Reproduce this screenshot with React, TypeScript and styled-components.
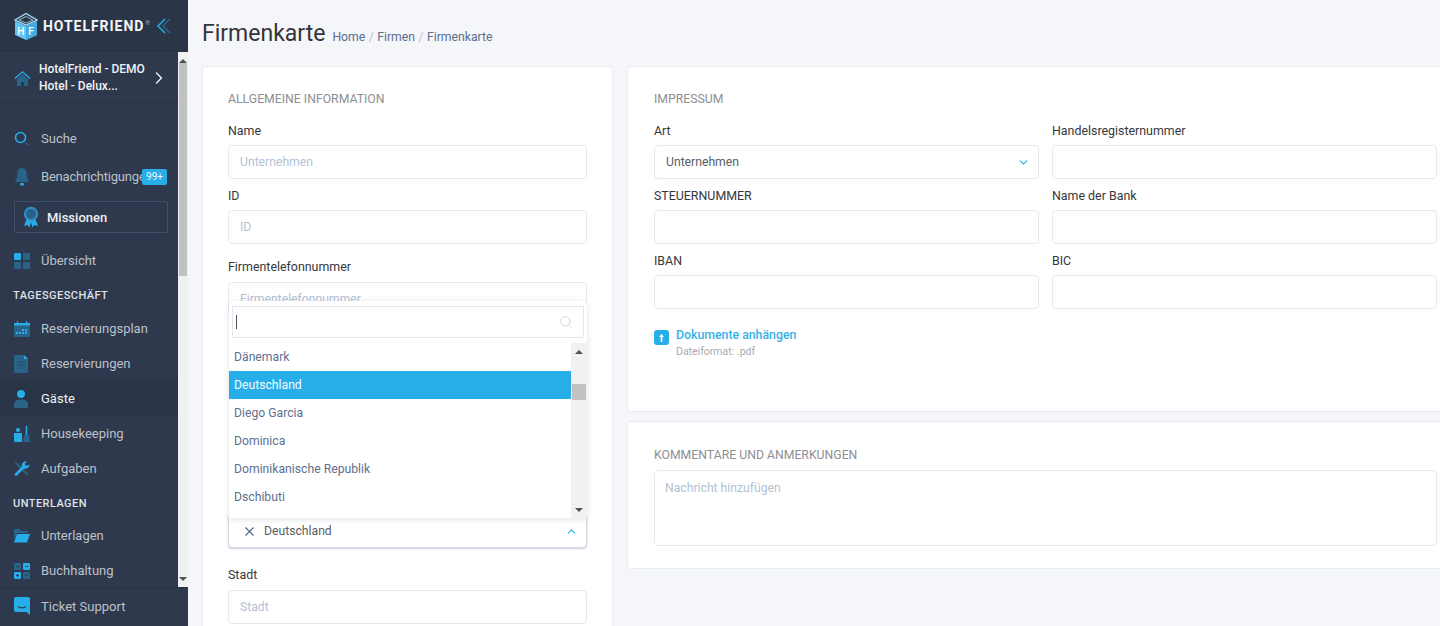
import styled, { createGlobalStyle } from "styled-components";
import { Search, X, ChevronDown, ChevronUp, ChevronRight } from "lucide-react";

const BRIGHT = "#27aee8";
const DIM = "#296387";

const GlobalStyle = createGlobalStyle`
  html, body {
    margin: 0;
    padding: 0;
    height: 100%;
    overflow: hidden;
    background: #f5f6fa;
    font-family: Roboto, "Liberation Sans", sans-serif;
  }
  * { box-sizing: border-box; }
`;

const Page = styled.div`
  display: flex;
  width: 1440px;
  height: 626px;
  overflow: hidden;
`;

const Sidebar = styled.aside`
  flex: 0 0 188px;
  display: flex;
  flex-direction: column;
  background: #2f394d;
`;

const Brand = styled.div`
  flex: 0 0 52px;
  display: flex;
  align-items: center;
  padding-left: 14px;
  background: #2b3548;
  border-bottom: 1px solid #273143;
`;

const BrandName = styled.span`
  margin-left: 5px;
  font-size: 14px;
  font-weight: 700;
  letter-spacing: 0.95px;
  color: #f4f6f8;
  white-space: nowrap;
  sup {
    font-size: 6px;
    font-weight: 400;
    color: #aab2bf;
    vertical-align: 6px;
    line-height: 0;
    margin-left: 1px;
  }
`;

const Collapse = styled.span`
  display: flex;
  margin-left: 6px;
`;

const SideBody = styled.div`
  flex: 1;
  min-height: 0;
  display: flex;
`;

const SideColumn = styled.div`
  flex: 0 0 178px;
  min-width: 0;
  overflow: hidden;
`;

const HotelBlock = styled.div`
  height: 51px;
  display: flex;
  align-items: center;
  padding: 2px 0 0 14px;
  border-bottom: 1px solid #283244;
  color: #f0f2f5;
`;

const HotelName = styled.div`
  margin-left: 8px;
  width: 113px;
  font-size: 12px;
  font-weight: 500;
  line-height: 17px;
  white-space: nowrap;
`;

const HotelArrow = styled.span`
  display: flex;
  margin-left: -3px;
`;

const NavList = styled.nav`
  padding-top: 18px;
`;

const NavItem = styled.div<{ $top?: number; $active?: boolean }>`
  position: relative;
  height: 35px;
  margin-top: ${(p) => p.$top ?? 0}px;
  display: flex;
  align-items: center;
  padding-left: 14px;
  background: ${(p) => (p.$active ? "#293447" : "transparent")};
  color: ${(p) => (p.$active ? "#f0f2f5" : "#bcc1ca")};
  font-size: 13px;
  white-space: nowrap;
`;

const NavIcon = styled.span`
  flex: 0 0 27px;
  display: flex;
  align-items: center;
`;

const TightLabel = styled.span`
  letter-spacing: -0.2px;
`;

const Badge = styled.span`
  position: absolute;
  left: 142px;
  top: 10px;
  width: 25px;
  height: 16px;
  border-radius: 2px;
  background: ${BRIGHT};
  color: #e9f7fd;
  font-size: 10px;
  line-height: 16px;
  text-align: center;
`;

const MissionBox = styled.div`
  margin: 7px 0 0 14px;
  width: 154px;
  height: 32px;
  display: flex;
  align-items: center;
  padding-left: 8px;
  border: 1px solid #42506a;
  border-radius: 2px;
  color: #eef0f3;
  font-size: 13px;
  font-weight: 500;
`;

const MissionIcon = styled.span`
  flex: 0 0 24px;
  display: flex;
`;

const SectionLabel = styled.div<{ $height: number }>`
  height: ${(p) => p.$height}px;
  display: flex;
  align-items: center;
  padding: 2px 0 0 13px;
  color: #dfe2e7;
  font-size: 11px;
  font-weight: 500;
  letter-spacing: 0.45px;
`;

const SideFooter = styled.div`
  flex: 0 0 39px;
  display: flex;
  align-items: center;
  padding: 0 0 2px 14px;
  background: #2f394d;
  border-top: 1px solid #283244;
  color: #bcc1ca;
  font-size: 13px;
`;

const ScrollTrack = styled.div<{ $width: number }>`
  flex: 0 0 ${(p) => p.$width}px;
  display: flex;
  flex-direction: column;
  align-items: center;
  background: #f1f1f1;
`;

const ScrollCap = styled.div`
  flex: 0 0 17px;
  display: flex;
  align-items: center;
  justify-content: center;
`;

const Caret = styled.span<{ $down?: boolean }>`
  width: 0;
  height: 0;
  border-left: 4px solid transparent;
  border-right: 4px solid transparent;
  ${(p) => (p.$down ? "border-top: 4px solid #505050;" : "border-bottom: 4px solid #505050;")}
`;

const ScrollThumb = styled.div<{ $offset: number; $height: number }>`
  flex: 0 0 ${(p) => p.$height}px;
  width: calc(100% - 2px);
  margin-top: ${(p) => p.$offset}px;
  background: #c1c1c1;
`;

const ScrollGap = styled.div`
  flex: 1;
`;

const Main = styled.main`
  flex: 1;
  min-width: 0;
  padding-left: 14px;
`;

const TitleRow = styled.header`
  height: 66px;
  display: flex;
  align-items: baseline;
  padding-top: 19px;
`;

const Title = styled.h1`
  margin: 0;
  font-size: 23px;
  line-height: 30px;
  font-weight: 400;
  color: #333438;
`;

const Crumbs = styled.div`
  margin-left: 7px;
  font-size: 12.2px;
  color: #5d6d8e;
  span {
    color: #b9bfca;
    margin: 0 3.5px;
  }
`;

const Columns = styled.div`
  display: grid;
  grid-template-columns: 411px 840px;
  column-gap: 14px;
  align-items: start;
`;

const RightColumn = styled.div`
  display: flex;
  flex-direction: column;
  gap: 9px;
`;

const Card = styled.section<{ $height?: number; $pad: number; $padTop: number }>`
  background: #fff;
  border: 1px solid #e9ebf2;
  border-radius: 4px;
  padding: ${(p) => p.$padTop}px ${(p) => p.$pad}px 24px;
  ${(p) => (p.$height ? `height: ${p.$height}px;` : "")}
`;

const CardTitle = styled.h2`
  margin: 0;
  font-size: 12.25px;
  line-height: 16px;
  font-weight: 400;
  color: #8d8e91;
  text-transform: uppercase;
`;

const Field = styled.div<{ $top: number }>`
  margin-top: ${(p) => p.$top}px;
`;

const Label = styled.div<{ $gap?: number }>`
  font-size: 12.4px;
  line-height: 16px;
  font-weight: 400;
  color: #36373b;
  margin-bottom: ${(p) => p.$gap ?? 6}px;
`;

const Input = styled.input`
  display: block;
  width: 100%;
  height: 34px;
  padding: 0 11px;
  border: 1px solid #e6e9f2;
  border-radius: 4px;
  background: #fff;
  font: 400 12.2px Roboto, sans-serif;
  color: #4a4b4f;
  outline: none;
  &::placeholder {
    color: #b4bfd4;
    opacity: 1;
  }
`;

const SelectBox = styled.div<{ $open?: boolean }>`
  position: relative;
  height: 34px;
  display: flex;
  align-items: center;
  justify-content: space-between;
  padding: 0 8px 0 11px;
  border: 1px solid ${(p) => (p.$open ? "#d5d9e6" : "#e6e9f2")};
  border-radius: 4px;
  background: #fff;
  font-size: 12.2px;
  color: #5b5d63;
  ${(p) => (p.$open ? "box-shadow: 0 1px 2px rgba(90, 100, 140, 0.3);" : "")}
`;

const SelectedValue = styled.span`
  display: flex;
  align-items: center;
  gap: 7px;
  padding-left: 2px;
  svg {
    color: #52648a;
  }
`;

const Popup = styled.div`
  position: absolute;
  left: 0;
  right: -1px;
  bottom: 29px;
  height: 217px;
  display: flex;
  flex-direction: column;
  background: #fff;
  border-radius: 4px 4px 0 0;
  box-shadow: 0 1px 6px rgba(70, 80, 110, 0.16);
`;

const PopupSearch = styled.div`
  margin: 5px 3px 0 3px;
  flex: 0 0 32px;
  display: flex;
  align-items: center;
  justify-content: space-between;
  padding: 0 10px 0 3px;
  border: 1px solid #e3e7f1;
  color: #c4ccda;
`;

const TextCursor = styled.span`
  width: 1px;
  height: 14px;
  background: #555;
`;

const PopupBody = styled.div`
  flex: 1;
  min-height: 0;
  display: flex;
  margin-top: 5px;
`;

const OptionList = styled.div`
  flex: 1;
`;

const Option = styled.div<{ $selected?: boolean }>`
  height: 28px;
  display: flex;
  align-items: center;
  padding-left: 5px;
  font-size: 12.2px;
  color: ${(p) => (p.$selected ? "#f2fbff" : "#5f6f90")};
  background: ${(p) => (p.$selected ? BRIGHT : "transparent")};
`;

const ImprintGrid = styled.div`
  display: grid;
  grid-template-columns: 385px 385px;
  column-gap: 13px;
`;

const Upload = styled.div`
  margin-top: 18px;
  display: flex;
  align-items: flex-start;
`;

const UploadIcon = styled.span`
  flex: 0 0 15px;
  height: 15px;
  margin-top: 3px;
  display: flex;
  align-items: center;
  justify-content: center;
  border-radius: 3px;
  background: ${BRIGHT};
`;

const UploadText = styled.div`
  margin-left: 7px;
`;

const UploadLink = styled.div`
  font-size: 12.3px;
  line-height: 16px;
  font-weight: 500;
  color: #35b1e8;
`;

const UploadHint = styled.div`
  margin-top: 2px;
  font-size: 10.5px;
  line-height: 14px;
  color: #a9abaf;
`;

const Comment = styled.div`
  margin-top: 7px;
  width: 783px;
  height: 76px;
  padding: 9px 10px;
  border: 1px solid #e6e9f2;
  border-radius: 4px;
  font-size: 12.2px;
  line-height: 16px;
  color: #b4bfd4;
`;

const Logo = () => (
  <svg width="24" height="28" viewBox="0 0 24 28">
    <path d="M1 9 12 14l11-5v14l-11 5-11-5z" fill="#63c6f2" />
    <path d="M12 14v14l11-5V9z" fill="#43abe2" />
    <path d="M1 8 12 1.500 23 8 12 13z" fill="none" stroke="#a5def7" strokeWidth="1.300" />
    <path d="M5 8 12 4.500 19 8 12 11z" fill="none" stroke="#a5def7" strokeWidth="0.800" />
    <text x="3.200" y="23" fontSize="10" fontWeight="500" fill="#fff" fontFamily="Roboto, sans-serif">H</text>
    <text x="14.200" y="23" fontSize="10" fontWeight="500" fill="#fff" fontFamily="Roboto, sans-serif">F</text>
  </svg>
);

const CollapseIcon = () => (
  <svg width="14" height="16" viewBox="0 0 14 16" fill="none" strokeWidth="1.500">
    <path d="M13 1 6 8l7 7" stroke={DIM} />
    <path d="M8 1 1 8l7 7" stroke={BRIGHT} />
  </svg>
);

const HomeIcon = () => (
  <svg width="17" height="17" viewBox="0 0 17 17">
    <path d="M3 8.500 8.500 4 14 8.500V16h-4v-4H7v4H3z" fill={DIM} />
    <path d="M.8 8.500 8.500 1.800l7.700 6.700" fill="none" stroke={BRIGHT} strokeWidth="1.300" />
  </svg>
);

const SearchIcon = () => (
  <svg width="16" height="16" viewBox="0 0 16 16">
    <circle cx="6.500" cy="6.500" r="5" fill="none" stroke={BRIGHT} strokeWidth="1.600" />
    <path d="m10.500 10.500 4 4" stroke={DIM} strokeWidth="1.600" />
  </svg>
);

const BellIcon = () => (
  <svg width="16" height="20" viewBox="0 0 16 20">
    <path d="M8 1c3 0 4.600 2.400 4.600 5.400 0 3.600 1 6 2.800 8.600H.6C2.400 12.400 3.400 10 3.400 6.400 3.400 3.400 5 1 8 1z" fill={DIM} />
    <rect x="6" y="16" width="4" height="2.500" rx="1.200" fill={BRIGHT} />
  </svg>
);

const MedalIcon = () => (
  <svg width="16" height="22" viewBox="0 0 16 22">
    <path d="M4 12 1 20l3.500-1 2 2.500L8 16l1.500 5.500 2-2.500 3.500 1-3-8z" fill={BRIGHT} />
    <circle cx="8" cy="8" r="7.200" fill="#2f8fc4" />
    <circle cx="8" cy="8" r="5" fill={DIM} />
  </svg>
);

const GridIcon = () => (
  <svg width="16" height="16" viewBox="0 0 16 16">
    <rect width="7" height="7" rx="1" fill={BRIGHT} />
    <rect x="9" width="7" height="7" rx="1" fill={DIM} />
    <rect y="9" width="7" height="7" rx="1" fill={DIM} />
    <rect x="9" y="9" width="7" height="7" rx="1" fill={DIM} />
  </svg>
);

const CalendarIcon = () => (
  <svg width="16" height="16" viewBox="0 0 16 16">
    <rect y="2" width="16" height="14" rx="1" fill={DIM} />
    <rect y="2" width="16" height="2.500" fill={BRIGHT} />
    <path d="M3.500 0v3M12.500 0v3" stroke={BRIGHT} strokeWidth="1.200" />
    <path d="M2 11h2v2H2zM5 11h2v2H5zM8 8h2v2H8zM11 8h2v2h-2zM8 11h2v2H8zM11 11h2v2h-2z" fill={BRIGHT} />
  </svg>
);

const DocIcon = () => (
  <svg width="14" height="18" viewBox="0 0 14 18">
    <path d="M1 0h9l4 4v13a1 1 0 0 1-1 1H1a1 1 0 0 1-1-1V1a1 1 0 0 1 1-1z" fill={DIM} />
    <path d="M10 0l4 4h-4z" fill={BRIGHT} />
    <path d="M3 7h8M3 10h8M3 13h5" stroke="#1f4c6b" strokeWidth="1.200" />
  </svg>
);

const GuestIcon = () => (
  <svg width="14" height="18" viewBox="0 0 14 18">
    <circle cx="7" cy="4" r="4" fill={BRIGHT} />
    <path d="M0 14.500C0 11 3 9.500 7 9.500s7 1.500 7 5V18H0z" fill={DIM} />
  </svg>
);

const BroomIcon = () => (
  <svg width="16" height="16" viewBox="0 0 16 16">
    <path d="M0 7h8v8a1 1 0 0 1-1 1H1a1 1 0 0 1-1-1z" fill={BRIGHT} />
    <circle cx="4" cy="4" r="2" fill={BRIGHT} />
    <path d="M12.500 0v9" stroke={BRIGHT} strokeWidth="1.500" />
    <path d="M10 9h5l1 7H9z" fill={DIM} />
  </svg>
);

const WrenchIcon = () => (
  <svg width="16" height="16" viewBox="0 0 16 16">
    <path d="m1 1 2 .5L14.500 13 13 14.500 1.500 3z" fill={DIM} />
    <path d="M15.500 3.500a4 4 0 0 1-5.500 4L3 14.500a1.400 1.400 0 0 1-2-2L8 5.500a4 4 0 0 1 5-5L10.500 3l2 2z" fill={BRIGHT} />
  </svg>
);

const FolderIcon = () => (
  <svg width="16" height="14" viewBox="0 0 16 14">
    <path d="M0 1a1 1 0 0 1 1-1h4l2 2h6a1 1 0 0 1 1 1v1H3L0 11z" fill={DIM} />
    <path d="M3 5h13l-3 8.500H0z" fill={BRIGHT} />
  </svg>
);

const CalcIcon = () => (
  <svg width="16" height="16" viewBox="0 0 16 16">
    <rect width="7" height="7" rx="1" fill={DIM} />
    <rect x="9" width="7" height="7" rx="1" fill={BRIGHT} />
    <rect y="9" width="7" height="7" rx="1" fill={BRIGHT} />
    <rect x="9" y="9" width="7" height="7" rx="1" fill={DIM} />
    <path d="M2 3.500h3M11 3.500h3M2 12.500h3M3.500 11v3M11 12.500h3" stroke="#2f394d" strokeWidth="0.900" />
  </svg>
);

const SupportIcon = () => (
  <svg width="16" height="18" viewBox="0 0 16 18">
    <path d="M2 0h12a2 2 0 0 1 2 2v16l-3.500-3H2a2 2 0 0 1-2-2V2a2 2 0 0 1 2-2z" fill={BRIGHT} />
    <path d="M4 9.500c2.500 1.600 5.500 1.600 8 0" fill="none" stroke="#2f394d" strokeWidth="1.200" />
  </svg>
);

const UploadArrow = () => (
  <svg width="5" height="8" viewBox="0 0 5 8">
    <path d="M2.500 0 5 3H3.300v5H1.700V3H0z" fill="#fff" />
  </svg>
);

const countries = ["Dänemark", "Deutschland", "Diego Garcia", "Dominica", "Dominikanische Republik", "Dschibuti"];

export default function App() {
  return (
    <Page>
      <GlobalStyle />
      <Sidebar>
        <Brand>
          <Logo />
          <BrandName>
            HOTELFRIEND<sup>®</sup>
          </BrandName>
          <Collapse>
            <CollapseIcon />
          </Collapse>
        </Brand>
        <SideBody>
          <SideColumn>
            <HotelBlock>
              <HomeIcon />
              <HotelName>
                HotelFriend - DEMO
                <br />
                Hotel - Delux...
              </HotelName>
              <HotelArrow>
                <ChevronRight size={20} strokeWidth={1.6} />
              </HotelArrow>
            </HotelBlock>
            <NavList>
              <NavItem>
                <NavIcon><SearchIcon /></NavIcon>
                Suche
              </NavItem>
              <NavItem $top={3}>
                <NavIcon><BellIcon /></NavIcon>
                <TightLabel>Benachrichtigungen</TightLabel>
                <Badge>99+</Badge>
              </NavItem>
              <MissionBox>
                <MissionIcon><MedalIcon /></MissionIcon>
                Missionen
              </MissionBox>
              <NavItem $top={10}>
                <NavIcon><GridIcon /></NavIcon>
                Übersicht
              </NavItem>
              <SectionLabel $height={33}>TAGESGESCHÄFT</SectionLabel>
              <NavItem>
                <NavIcon><CalendarIcon /></NavIcon>
                Reservierungsplan
              </NavItem>
              <NavItem>
                <NavIcon><DocIcon /></NavIcon>
                Reservierungen
              </NavItem>
              <NavItem $active>
                <NavIcon><GuestIcon /></NavIcon>
                Gäste
              </NavItem>
              <NavItem>
                <NavIcon><BroomIcon /></NavIcon>
                Housekeeping
              </NavItem>
              <NavItem>
                <NavIcon><WrenchIcon /></NavIcon>
                Aufgaben
              </NavItem>
              <SectionLabel $height={32}>UNTERLAGEN</SectionLabel>
              <NavItem>
                <NavIcon><FolderIcon /></NavIcon>
                Unterlagen
              </NavItem>
              <NavItem>
                <NavIcon><CalcIcon /></NavIcon>
                Buchhaltung
              </NavItem>
            </NavList>
          </SideColumn>
          <ScrollTrack $width={10}>
            <ScrollCap><Caret /></ScrollCap>
            <ScrollThumb $offset={-6} $height={213} />
            <ScrollGap />
            <ScrollCap><Caret $down /></ScrollCap>
          </ScrollTrack>
        </SideBody>
        <SideFooter>
          <NavIcon><SupportIcon /></NavIcon>
          Ticket Support
        </SideFooter>
      </Sidebar>

      <Main>
        <TitleRow>
          <Title>Firmenkarte</Title>
          <Crumbs>
            Home<span>/</span>Firmen<span>/</span>Firmenkarte
          </Crumbs>
        </TitleRow>
        <Columns>
          <Card $pad={25} $padTop={24}>
            <CardTitle>Allgemeine Information</CardTitle>
            <Field $top={16}>
              <Label>Name</Label>
              <Input placeholder="Unternehmen" readOnly />
            </Field>
            <Field $top={9}>
              <Label>ID</Label>
              <Input placeholder="ID" readOnly />
            </Field>
            <Field $top={15}>
              <Label $gap={7}>Firmentelefonnummer</Label>
              <Input placeholder="Firmentelefonnummer" readOnly />
            </Field>
            <Field $top={198}>
              <SelectBox $open>
                <SelectedValue>
                  <X size={15} strokeWidth={1.8} />
                  Deutschland
                </SelectedValue>
                <ChevronUp size={13} color={BRIGHT} />
                <Popup>
                  <PopupSearch>
                    <TextCursor />
                    <Search size={14} strokeWidth={1.4} />
                  </PopupSearch>
                  <PopupBody>
                    <OptionList>
                      {countries.map((c) => (
                        <Option key={c} $selected={c === "Deutschland"}>
                          {c}
                        </Option>
                      ))}
                    </OptionList>
                    <ScrollTrack $width={16}>
                      <ScrollCap><Caret /></ScrollCap>
                      <ScrollThumb $offset={24} $height={16} />
                      <ScrollGap />
                      <ScrollCap><Caret $down /></ScrollCap>
                    </ScrollTrack>
                  </PopupBody>
                </Popup>
              </SelectBox>
            </Field>
            <Field $top={19}>
              <Label $gap={7}>Stadt</Label>
              <Input placeholder="Stadt" readOnly />
            </Field>
          </Card>

          <RightColumn>
            <Card $pad={26} $padTop={24} $height={346}>
              <CardTitle>Impressum</CardTitle>
              <ImprintGrid>
                <Field $top={16}>
                  <Label>Art</Label>
                  <SelectBox>
                    Unternehmen
                    <ChevronDown size={13} color={BRIGHT} />
                  </SelectBox>
                </Field>
                <Field $top={16}>
                  <Label>Handelsregisternummer</Label>
                  <Input readOnly />
                </Field>
                <Field $top={9}>
                  <Label>STEUERNUMMER</Label>
                  <Input readOnly />
                </Field>
                <Field $top={9}>
                  <Label>Name der Bank</Label>
                  <Input readOnly />
                </Field>
                <Field $top={9}>
                  <Label>IBAN</Label>
                  <Input readOnly />
                </Field>
                <Field $top={9}>
                  <Label>BIC</Label>
                  <Input readOnly />
                </Field>
              </ImprintGrid>
              <Upload>
                <UploadIcon><UploadArrow /></UploadIcon>
                <UploadText>
                  <UploadLink>Dokumente anhängen</UploadLink>
                  <UploadHint>Dateiformat: .pdf</UploadHint>
                </UploadText>
              </Upload>
            </Card>
            <Card $pad={26} $padTop={25} $height={148}>
              <CardTitle>Kommentare und Anmerkungen</CardTitle>
              <Comment>Nachricht hinzufügen</Comment>
            </Card>
          </RightColumn>
        </Columns>
      </Main>
    </Page>
  );
}
